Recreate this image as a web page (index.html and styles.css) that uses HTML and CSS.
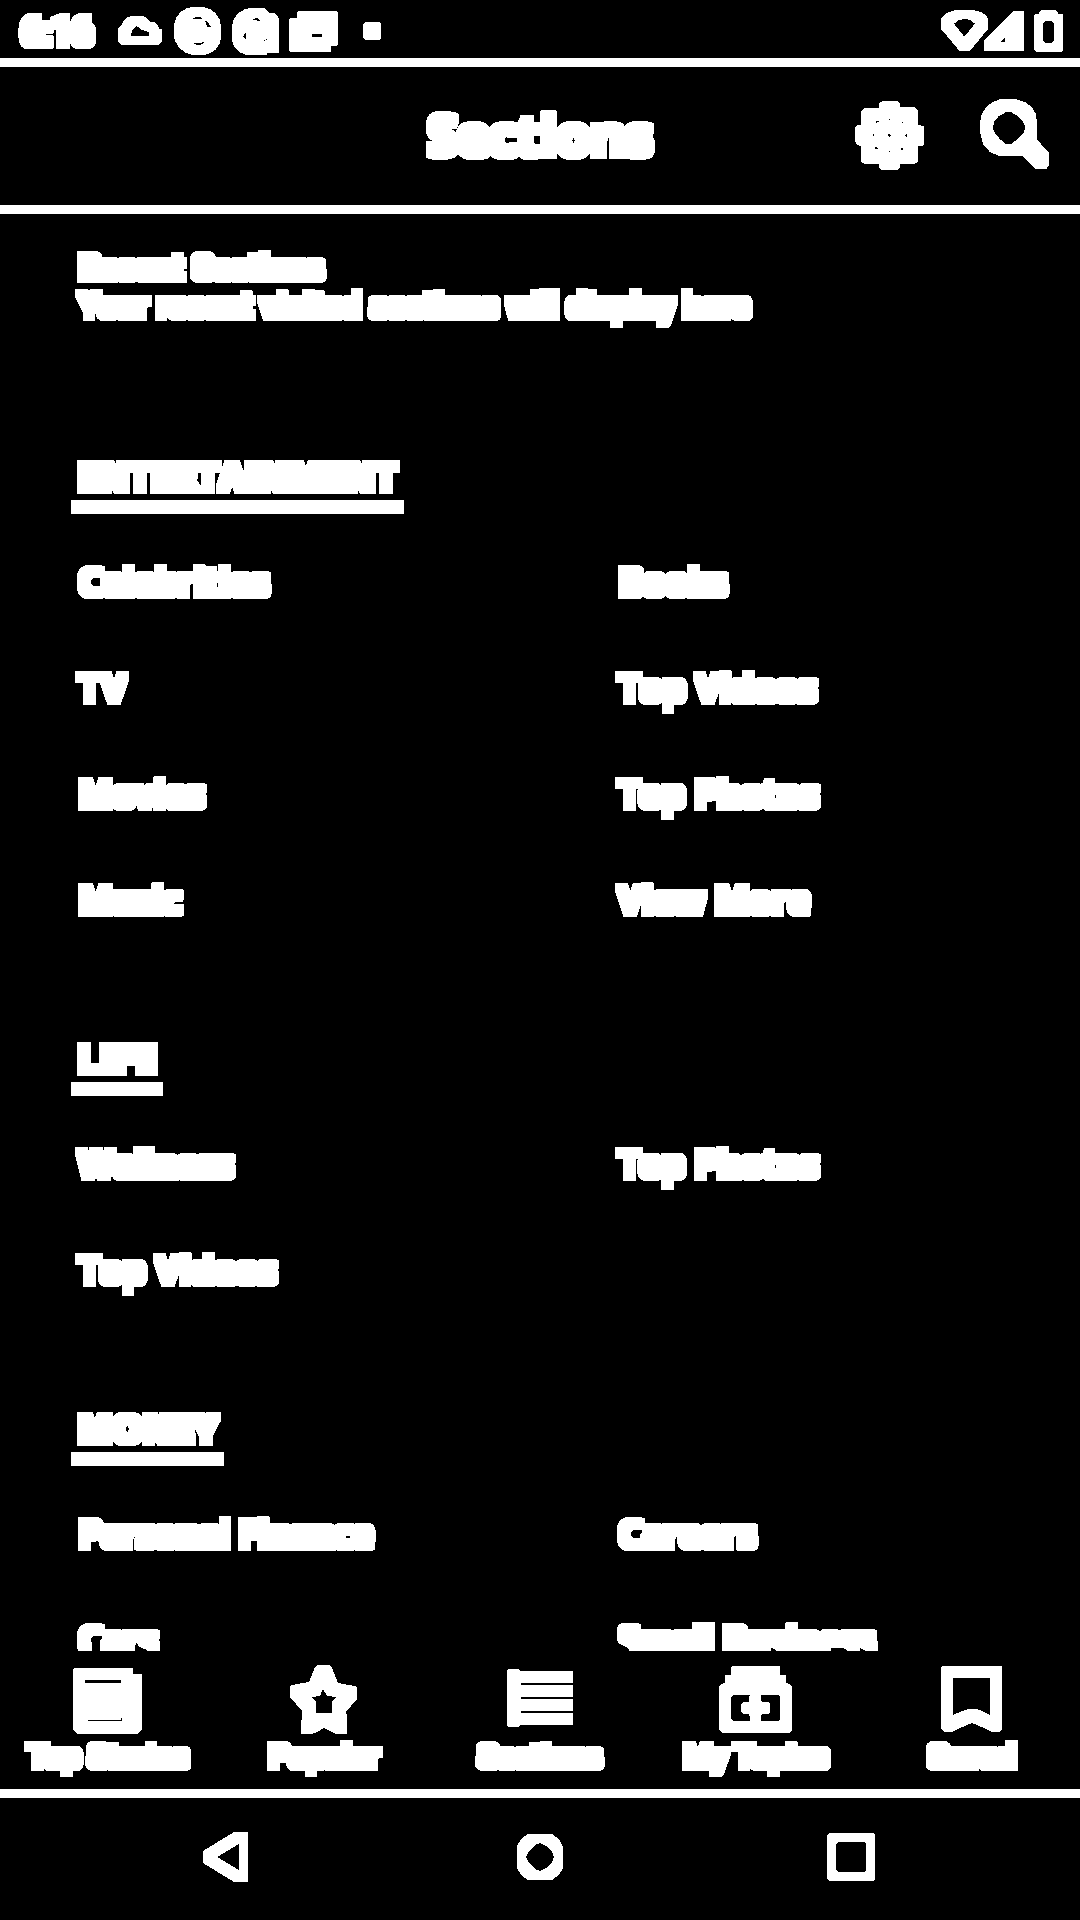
FILE: index.html
```html
<!DOCTYPE html>
<html lang="en">
<head>
<meta charset="utf-8">
<title>Sections</title>
<link rel="stylesheet" href="styles.css">
</head>
<body>
<svg class="defs" width="0" height="0" aria-hidden="true">
  <filter id="thicken" x="-20" y="-20" width="1120" height="1960" filterUnits="userSpaceOnUse" color-interpolation-filters="sRGB">
    <feMorphology operator="dilate" radius="4"/>
    <feComponentTransfer><feFuncA type="discrete" tableValues="0 1 1 1 1 1"/></feComponentTransfer>
  </filter>
</svg>

<div class="status">
  <span class="clock thick">6:16</span>
  <svg class="notifications" width="264" height="58" viewBox="354 0 792 174">
    <path fill-rule="evenodd" d="M354 84l10-9 6-12 12-11 13-4h32l13 5 10 13h14l10 9 3 10 9 4v36l-9 10H363l-9-9zM393 107h54V96l-21-6-16-12-14 14z"/>
    <path fill-rule="evenodd" d="M522 76l6-22 14-19 20-11 20-4h24l24 7 17 13 12 18 4 20v36l-5 19-12 17-20 12-14 3h-36l-20-7-20-16-11-20-3-12zM579 56h18l12 2-6-6h-18zM612 58l6 10 3 13h12l-9-13zM579 129l12 7h9l15-10-18 3z"/>
    <path fill-rule="evenodd" d="M696 78l6-22 14-18 20-11 18-3h38l18 15h14l10 9 3 12v99h-37v6h-60l-20-8-16-14-8-22zM755 61h12l16 2-14-10zM738 98l-9 11 9 11zM792 120h3v4h-3zM798 117h4v4h-4z"/>
    <path fill-rule="evenodd" d="M867 60l3-6h20V38l4-5h115l5 5v94l-5 6h-16v18H873l-6-5zM936 102h30v9h-30z"/>
    <path d="M1089 72l6-6h42l6 6v42l-6 6h-42l-6-6z"/>
  </svg>
  <svg class="signals" width="124" height="58" viewBox="120 0 372 174">
    <path fill-rule="evenodd" d="M123 57l9-12 15-9 21-6h51l24 6 15 9 6 10v32l-54 66h-32l-9-12-46-54zM162 71l31 39 8-10 24-29-15-11-15-3-18 3z"/>
    <path fill-rule="evenodd" d="M252 120l87-87h33v120H252zM302 126h13v-13z"/>
    <path fill-rule="evenodd" d="M402 46l4-5h10l7-11h45l7 11h10l4 4v105l-5 6h-76l-6-6zM429 72v48l8 9h18l8-9V72l-8-8h-18z"/>
  </svg>
</div>

<header class="header">
  <h1 class="title thick">Sections</h1>
  <svg class="actions" width="195" height="71" viewBox="855 99 195 71">
    <g transform="translate(400 60) scale(.43366 .33333)">
      <path fill-rule="evenodd" d="M1105 130l7-7h34l7 7v11h32l9 9v43l14 6v55l-5 5h-9v47l-9 7h-32v11l-7 7h-34l-7-7v-11h-32l-10-7v-47l-9-5-5-9v-42l5-7h9v-43l9-9h33zM1098 183h8l-5 3-3 6zM1127 177h4v4h-4zM1154 185h6v6zM1088 225l5-4v8zM1128 221l5 5-5 5-4-5zM1163 226l5-4v8zM1095 258l7 8h-6zM1127 272h4v4h-4zM1152 268l8-6v7z"/>
      <path fill-rule="evenodd" d="M1337 190l4-26 9-20 15-17 20-10h33l24 10 16 15 9 22 2 30v45l28 40v38l-7 10h-24l-32-40h-53l-20-10-16-24-7-33zM1367 203l4 14 12 20 13 14h14l14-14 14-18 4-16-5-18-12-16-13-10-4-4h-10l-5 5-12 8-10 16z"/>
    </g>
  </svg>
</header>

<main class="content thick">
  <div class="scroller">
    <section class="recent">
      <h2 class="recent-title">Recent Sections</h2>
      <p class="recent-text">Your recent visited sections will display here</p>
    </section>
    <section class="group">
      <h2 class="group-title">ENTERTAINMENT</h2>
      <ul class="links">
        <li>Celebrities</li><li>Books</li>
        <li class="short">TV</li><li class="loose">Top Videos</li>
        <li>Movies</li><li>Top Photos</li>
        <li class="even">Music</li><li class="loose">View More</li>
      </ul>
    </section>
    <section class="group">
      <h2 class="group-title narrow">LIFE</h2>
      <ul class="links">
        <li class="even">Wellness</li><li>Top Photos</li>
        <li class="loose">Top Videos</li>
      </ul>
    </section>
    <section class="group">
      <h2 class="group-title">MONEY</h2>
      <ul class="links">
        <li class="tight">Personal Finance</li><li>Careers</li>
        <li>Cars</li><li class="tight">Small Business</li>
      </ul>
    </section>
  </div>
</main>

<nav class="tabs">
  <div class="tab">
    <svg width="76" height="72" viewBox="70 1664 76 72"><path fill-rule="evenodd" d="M73 1669l1-1h59v6h8l1 1v54l-2 3-3 2H78l-3-2-2-3zM85 1680v3h36v-3zM88 1721h34v-3h-1v2H88z"/></svg>
    <span class="label thick">Top Stories</span>
  </div>
  <div class="tab">
    <svg width="76" height="72" viewBox="286 1664 76 72"><path fill-rule="evenodd" d="M317 1665h13l2 3 6 15 17 3 2 1v12l-11 13 1 4v18h-11l-6-3-6-3-7 4-5 2h-11v-4l1-19-12-14v-11l2-1 17-3 6-15zM323 1689l-3 7-8 1 4 5v11h16v-11l4-5-9-1z"/></svg>
    <span class="label thick">Popular</span>
  </div>
  <div class="tab">
    <svg width="76" height="72" viewBox="502 1664 76 72"><path fill-rule="evenodd" d="M507 1670l1-1h11l1 2h53v54h-53l-1 2h-11l-1-1zM521 1683v2h52v-2zM521 1697v2h52v-2zM521 1711v2h52v-2z"/></svg>
    <span class="label thick">Sections</span>
  </div>
  <div class="tab">
    <svg width="76" height="72" viewBox="718 1664 76 72"><path fill-rule="evenodd" d="M731 1667l1-1h47l1 1v8h6v8l4 1 2 3v43l-2 3h-68l-3-3v-43l2-3 4-1v-8h6zM733 1695l-2 2v22l2 2h17v-3l-1-4h-6l-2-2v-8l2-2h6v-4l1-3zM761 1695v4l1 3h6l2 2v8l-2 2h-6l-1 3v4h17l2-2v-22l-2-2z"/></svg>
    <span class="label thick">My Topics</span>
  </div>
  <div class="tab">
    <svg width="76" height="72" viewBox="934 1664 76 72"><path fill-rule="evenodd" d="M941 1667l1-1h59l1 1v62l-3 3h-7l-8-4-12-5-12 5-8 4h-8l-3-3zM953 1678v37l9-4 6-2h8l6 2 8 4v-37z"/></svg>
    <span class="label thick">Saved</span>
  </div>
</nav>

<footer class="system">
  <svg width="50" height="50" viewBox="203 1832 50 50"><path fill-rule="evenodd" d="M203 1851l31-19h13l1 1v48l-1 1h-13l-31-19zM217 1857l22 13v-26z"/></svg>
  <svg width="46" height="46" viewBox="517 1834 46 46"><path fill-rule="evenodd" d="M517 1846l4-7 7-5h24l7 5 4 8v21l-4 7-7 5h-24l-7-5-4-7zM526 1857l3 6 6 6 5 2 6-3 6-6 2-5-2-5-6-6-6-3-5 2-6 6z"/></svg>
  <svg width="48" height="48" viewBox="827 1833 48 48"><path fill-rule="evenodd" d="M827 1835l2-2h44l2 2v44l-2 2h-44l-2-2zM836 1844v26l2 2h26l2-2v-26l-2-2h-26z"/></svg>
</footer>
</body>
</html>
```
FILE: styles.css
```css
* { box-sizing: border-box; margin: 0; padding: 0; }
body {
  width: 1080px;
  height: 1920px;
  display: flex;
  flex-direction: column;
  background: #000;
  color: #fff;
  font-family: "Open Sans", sans-serif;
  overflow: hidden;
}
svg { display: block; fill: #fff; shape-rendering: crispEdges; }
.defs { position: absolute; }
.thick { filter: url(#thicken); }

.status {
  height: 67px;
  border-bottom: 9px solid #fff;
  display: flex;
  padding: 0 36px 0 21px;
}
.clock { width: 97px; font: 700 38px/64px Roboto, sans-serif; letter-spacing: -1.3px; white-space: nowrap; }
.signals { margin-left: auto; margin-right: -20px; }

.header {
  height: 147px;
  border-bottom: 9px solid #fff;
  display: grid;
  grid-template-columns: 225px 1fr 225px;
  padding-top: 32px;
}
.title { grid-column: 2; text-align: center; font-size: 54px; line-height: 70px; font-weight: 700; }
.actions { grid-column: 3; }

.content { height: 1437px; }
.scroller { height: 1433px; overflow: hidden; padding-top: 36px; }
.recent { padding-left: 79px; font-family: Roboto, sans-serif; font-size: 33px; line-height: 37px; margin-bottom: 133px; }
.recent-title { font-size: 32.5px; font-weight: 700; line-height: 37px; letter-spacing: 0.5px; }
.recent-text { white-space: nowrap; font-weight: 500; letter-spacing: 0.4px; }

.group { margin-bottom: 54px; }
.group-title {
  width: fit-content;
  margin-left: 75px;
  padding: 0 2px 7px 3px;
  border-bottom: 6px solid #fff;
  font-size: 36px;
  line-height: 40px;
  font-weight: 700;
  letter-spacing: 1.1px;
}
.group-title.narrow { letter-spacing: 2px; padding-right: 1px; }
.links {
  display: grid;
  grid-template-columns: 540px 1fr;
  grid-auto-rows: 106px;
  padding-left: 79px;
  margin: 52px 0 -1px;
  list-style: none;
  font-size: 36px;
  font-weight: 600;
  line-height: 40px;
  font-kerning: none;
  letter-spacing: 0.5px;
}
.loose { letter-spacing: 0.9px; }
.even { letter-spacing: 0.1px; }
.tight { letter-spacing: -0.1px; }
.short { letter-spacing: 3.5px; }

.tabs {
  height: 147px;
  border-bottom: 9px solid #fff;
  display: grid;
  grid-template-columns: repeat(5, 216px);
  padding-top: 13px;
}
.tab { display: flex; flex-direction: column; align-items: center; gap: 2px; }
.label { font: 500 31.7px/38px Roboto, sans-serif; }

.system { height: 122px; display: flex; justify-content: space-between; align-items: center; padding: 0 205px 4px 203px; }
```
